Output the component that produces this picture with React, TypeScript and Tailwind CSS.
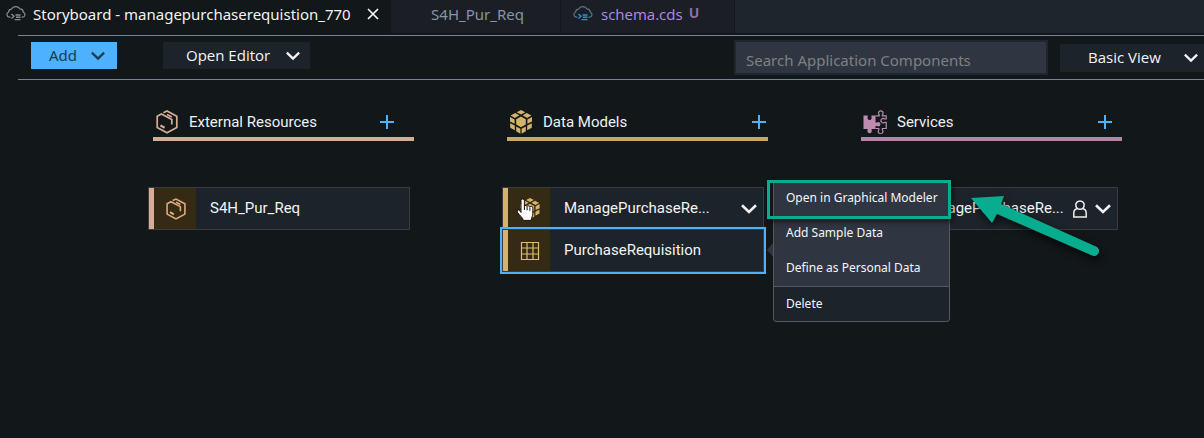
import type { ReactNode } from "react";

type IconProps = { className?: string };

function CloudIcon({ className, accent }: IconProps & { accent?: string }) {
  return (
    <svg viewBox="0 0 20 16" fill="none" strokeWidth="1.2" stroke="currentColor" className={className} aria-hidden="true">
      <path d="M4.4 11.2H3.4A2.7 2.7 0 0 1 2.6 6 3 3 0 0 1 5.4 3.2 5 5 0 0 1 14 2.9 3.6 3.6 0 0 1 17.3 6.2 2.6 2.6 0 0 1 16.6 11.2H15.6" />
      <g stroke={accent ?? "currentColor"} strokeWidth="1.4">
        <path d="M5.5 8 8 10.3 5.5 12.6M9.5 9H14.5M10 11.2H14.5M8.5 13.6H14.5" />
      </g>
    </svg>
  );
}

function ChevronIcon({ className }: IconProps) {
  return (
    <svg viewBox="0 0 16 10" fill="none" stroke="currentColor" strokeWidth="2.6" className={className} aria-hidden="true">
      <path d="M1 1.2 8 8 15 1.2" />
    </svg>
  );
}

function PlusIcon() {
  return (
    <svg viewBox="0 0 14 14" fill="none" stroke="currentColor" strokeWidth="2" className="size-3.5" aria-hidden="true">
      <path d="M7 0V14M0 7H14" />
    </svg>
  );
}

function HexIcon({ className }: IconProps) {
  return (
    <svg viewBox="0 0 22 24" fill="none" stroke="currentColor" strokeWidth="1.7" className={className} aria-hidden="true">
      <path d="M7.4 2.7 11 1 20.8 6.2V17.6L11 22.8 1.2 17.6V6.2L5.4 4 15.8 9.4V14.4" />
      <path d="M11 4.4 15.8 7" />
      <path d="M4.4 15.4 8.6 17.8" strokeWidth="2.2" />
    </svg>
  );
}

function CubesIcon({ className }: IconProps) {
  return (
    <svg viewBox="0 0 22 24" fill="currentColor" className={className} aria-hidden="true">
      <path d="M11 0 15.4 2.3 11 4.6 6.6 2.3Z" />
      <path d="M5.2 3.1 9.4 5.3 4.9 8 .6 5.6Z" />
      <path d="M16.8 3.1 21.4 5.6 17.1 8 12.6 5.3Z" />
      <path d="M11 6.6 15.8 9.2V14.6L11 17.2 6.2 14.6V9.2Z" />
      <path d="M0 6.9 4.6 9.4V13.8L0 11.6Z" />
      <path d="M22 6.9 17.4 9.4V13.8L22 11.6Z" />
      <path d="M.2 13.2 4.8 15.6V20.2L.2 17.8Z" />
      <path d="M21.8 13.2 17.2 15.6V20.2L21.8 17.8Z" />
      <path d="M6.2 16.4 10.4 18.8V23.7L6.2 21.3Z" />
      <path d="M15.8 16.4 11.6 18.8V23.7L15.8 21.3Z" />
    </svg>
  );
}

function PuzzleIcon({ className }: IconProps) {
  return (
    <svg viewBox="0 0 24 24" className={className} aria-hidden="true">
      <path
        fill="currentColor"
        d="M.5 5.5H4.8V6.8A2.1 2.1 0 1 0 8.4 6.8V5.5H12.5V12.4H14A2.2 2.2 0 1 1 14 16H12.5V19H8.6V20.2A2.2 2.2 0 1 1 4.6 20.2V19H.5Z"
      />
      <path
        fill="none"
        stroke="currentColor"
        strokeWidth="1.2"
        d="M12.5 5.8H16.2V4.8A2.3 2.3 0 1 1 19.4 4.8V5.8H23.2V9H21.6A2.2 2.2 0 1 0 21.6 12.4H23.2V18.5H19.4V20A2.3 2.3 0 1 1 15.8 20V18.5H12.5"
      />
    </svg>
  );
}

function TableIcon({ className }: IconProps) {
  return (
    <svg viewBox="0 0 20 20" fill="none" stroke="currentColor" strokeWidth="1.2" className={className} aria-hidden="true">
      <path d="M1.5 1.5H18.5V18.5H1.5ZM7 1.5V18.5M13 1.5V18.5M1.5 7H18.5M1.5 13H18.5" />
    </svg>
  );
}

function PersonIcon({ className }: IconProps) {
  return (
    <svg viewBox="0 0 14 18" fill="none" stroke="currentColor" strokeWidth="1.5" className={className} aria-hidden="true">
      <path d="M4.6 8.6A4.2 4.2 0 1 1 9.4 8.6C12 9.2 13.2 10.8 13.2 13V17H.8V13C.8 10.8 2 9.2 4.6 8.6ZM4.6 8.6Q7 10 9.4 8.6" />
    </svg>
  );
}

function HandCursor({ className }: IconProps) {
  return (
    <svg viewBox="0 0 18 24" className={className} aria-hidden="true">
      <path
        d="M5 14.5V2.6A1.7 1.7 0 0 1 8.4 2.6V8A1.5 1.5 0 0 1 11 8.6 1.5 1.5 0 0 1 13.8 9.4 1.5 1.5 0 0 1 16.8 10.4V15.6C16.8 18.2 15.4 19.4 15.2 22.4H7.4C7 19.8 3.6 17.6 1.4 14.2 .4 12.4 2.4 11.2 3.6 12.6Z"
        fill="#fff"
        stroke="#111"
        strokeWidth="1"
      />
      <path d="M8.4 8V12M11.1 9V12.4M13.9 10V12.8" stroke="#111" strokeWidth="1" fill="none" />
    </svg>
  );
}

function Column({
  title,
  icon,
  tone,
  addSpacing,
  children,
}: {
  title: string;
  icon: ReactNode;
  tone: string;
  addSpacing: string;
  children: ReactNode;
}) {
  return (
    <section className="min-w-0">
      <header className={`ml-[5px] -mr-1 flex h-[34px] items-center border-b-4 ${tone}`}>
        <span className="flex w-7 shrink-0 justify-center">{icon}</span>
        <h2 className="ml-2 flex-1 whitespace-nowrap font-[Roboto,sans-serif] text-[15px] font-normal leading-5 text-[#eef1f4]">
          {title}
        </h2>
        <button type="button" aria-label={`Add to ${title}`} className={`text-[#4db1ff] ${addSpacing}`}>
          <PlusIcon />
        </button>
      </header>
      <div className="mt-[46px] flex flex-col">{children}</div>
    </section>
  );
}

function Card({
  label,
  icon,
  bar,
  selected,
  actions,
  children,
}: {
  label: string;
  icon: ReactNode;
  bar: string;
  selected?: boolean;
  actions?: ReactNode;
  children?: ReactNode;
}) {
  return (
    <article
      className={`relative -mb-px flex h-[43px] items-center border border-[#3a3c40] bg-[#1d232a] ${
        selected ? "z-10 outline-2 outline-[#4db1ff]" : ""
      }`}
    >
      <div className={`w-[5px] shrink-0 self-stretch ${bar}`} />
      <div className="flex w-[42px] shrink-0 items-center justify-center self-stretch bg-[#352a14] pl-0.5">{icon}</div>
      <p className="ml-3.5 min-w-0 flex-1 whitespace-nowrap pb-0.5 font-[Roboto,sans-serif] text-[15px] leading-5 text-[#f2f4f6]">
        {label}
      </p>
      {actions && <div className="mr-1.5 flex items-center gap-2 text-[#f0f0f0]">{actions}</div>}
      {children}
    </article>
  );
}

function ContextMenu() {
  const item = "flex h-[35px] w-full items-center px-3 pb-px text-left";
  return (
    <div className="absolute left-full -top-[49px] z-20 ml-2.5 w-[177px]">
      <div
        role="menu"
        className="overflow-hidden rounded-b-[4px] border border-t-0 border-[#55585c] bg-[#303641] font-['Noto_Sans',sans-serif] text-[12px] text-[#f4f6f8]"
      >
        <button type="button" role="menuitem" className={`${item} whitespace-nowrap`}>Open in Graphical Modeler</button>
        <button type="button" role="menuitem" className={item}>Add Sample Data</button>
        <button type="button" role="menuitem" className={item}>Define as Personal Data</button>
        <button type="button" role="menuitem" className={`${item} border-t border-[#55585c] bg-[#1d232a]`}>Delete</button>
      </div>
      <svg viewBox="0 0 6 14" className="absolute -left-1.5 top-[62px] h-3.5 w-1.5 fill-[#303641]" aria-hidden="true">
        <path d="M6 0V14L0 7Z" />
      </svg>
      <div className="absolute -left-1.5 -top-px h-[39px] w-[184px] border-[3px] border-[#07ad8e] shadow-[2px_3px_5px_rgba(0,0,0,0.55)]" />
      <svg
        viewBox="0 0 136 76"
        className="absolute left-[196px] top-[7px] h-[76px] w-[136px] fill-[#07ad8e] drop-shadow-[2px_4px_4px_rgba(0,0,0,0.65)]"
        aria-hidden="true"
      >
        <path d="M2 10 35 8 32 16 127 58.4A5 5 0 0 1 123 67.6L28 26 23 35Z" />
      </svg>
    </div>
  );
}

export default function App() {
  return (
    <div className="min-h-screen overflow-hidden bg-[#12171a] font-['Noto_Sans',sans-serif] text-white">
      <nav className="flex h-[33px] bg-[#1e252b] text-[15px] leading-6" aria-label="Editor tabs">
        <div className="flex w-[391px] items-center bg-[#12171a] pb-1.5 pl-1.5">
          <CloudIcon className="h-4 w-5 shrink-0 text-[#8a8d90]" />
          <a href="#storyboard" className="ml-[7px] whitespace-nowrap text-[#f2f2f2]">
            Storyboard - managepurchaserequistion_770
          </a>
          <button type="button" aria-label="Close tab" className="ml-auto mr-3">
            <svg viewBox="0 0 12 12" fill="none" stroke="currentColor" strokeWidth="1.6" className="size-3" aria-hidden="true">
              <path d="M1 1 11 11M11 1 1 11" />
            </svg>
          </button>
        </div>
        <a
          href="#s4h"
          className="flex w-[170px] items-center justify-center border-r border-[#12171a] bg-[#1b1e25] pb-1.5 pl-1 text-[#8496a8]"
        >
          S4H_Pur_Req
        </a>
        <a
          href="#schema"
          className="flex w-[174px] items-center border-r border-[#12171a] bg-[#1b1e25] pb-1.5 pl-3 font-['Open_Sans',sans-serif] text-[#b18ce6]"
        >
          <CloudIcon className="h-4 w-5 text-[#55788c]" accent="#0b9fe0" />
          <span className="ml-2">schema.cds</span>
          <span className="ml-1.5 pb-0.5 text-[14px] font-bold text-[#8a6fa8]">U</span>
        </a>
      </nav>

      <div className="ml-[18px] mt-0.5 flex h-[45px] items-center border-y border-[#71869a] pl-[13px]">
        <button type="button" className="mb-1 flex h-[27px] w-[86px] items-center justify-between bg-[#4db1ff] pl-[18px] pr-3 text-[15px] text-[#1d3b55]">
          Add
          <ChevronIcon className="h-2.5 w-3.5" />
        </button>
        <button type="button" className="mb-1 ml-[46px] flex h-[27px] w-[147px] items-center justify-between bg-[#1d232a] pl-[23px] pr-2.5 text-[15px] text-[#f4f4f4]">
          <span className="font-['Open_Sans',sans-serif]">Open Editor</span>
          <ChevronIcon className="h-2.5 w-3.5" />
        </button>
        <div className="flex-1" />
        <input
          type="search"
          aria-label="Search Application Components"
          placeholder="Search Application Components"
          className="h-[35px] w-[314px] border-2 border-[#1f262e] bg-[#303641] px-2.5 pt-1 text-[15px] text-white outline-none placeholder:text-[#7d8085]"
        />
        <button type="button" className="ml-3 flex h-7 w-[144px] items-center justify-between bg-[#1d232a] pl-7 pr-1.5 text-[15px] text-[#f4f4f4]">
          <span className="font-['Open_Sans',sans-serif]">Basic View</span>
          <ChevronIcon className="h-2.5 w-3.5" />
        </button>
      </div>

      <main className="mt-[27px] grid grid-cols-3 gap-[92px] pl-[148px] pr-[86px]">
        <Column
          title="External Resources"
          tone="border-[#d6ae97]"
          addSpacing="mr-5"
          icon={<HexIcon className="h-6 w-[22px] text-[#d6ae97]" />}
        >
          <Card label="S4H_Pur_Req" bar="bg-[#d6ae97]" icon={<HexIcon className="h-[22px] w-5 text-[#dfae80]" />} />
        </Column>

        <Column
          title="Data Models"
          tone="border-[#c9a961]"
          addSpacing="mr-0.5"
          icon={<CubesIcon className="h-6 w-[22px] text-[#d3b36d]" />}
        >
          <Card
            label="ManagePurchaseRe..."
            bar="bg-[#d3b36d]"
            icon={
              <span className="relative flex">
                <CubesIcon className="h-[21px] w-5 text-[#d3b36d]" />
                <HandCursor className="absolute -left-1 top-0 h-6 w-[18px]" />
              </span>
            }
            actions={<ChevronIcon className="h-2.5 w-4" />}
          />
          <Card
            selected
            label="PurchaseRequisition"
            bar="bg-[#d3b36d]"
            icon={<TableIcon className="size-5 text-[#e0bd70]" />}
          >
            <ContextMenu />
          </Card>
        </Column>

        <Column
          title="Services"
          tone="border-[#b584a8]"
          addSpacing="mr-2.5"
          icon={<PuzzleIcon className="size-6 text-[#bd8bb0]" />}
        >
          <Card
            label="ManagePurchaseRe..."
            bar="bg-[#bd8bb0]"
            icon={<PuzzleIcon className="size-5 text-[#bd8bb0]" />}
            actions={
              <>
                <PersonIcon className="h-[18px] w-3.5" />
                <ChevronIcon className="h-2.5 w-4" />
              </>
            }
          />
        </Column>
      </main>
    </div>
  );
}
